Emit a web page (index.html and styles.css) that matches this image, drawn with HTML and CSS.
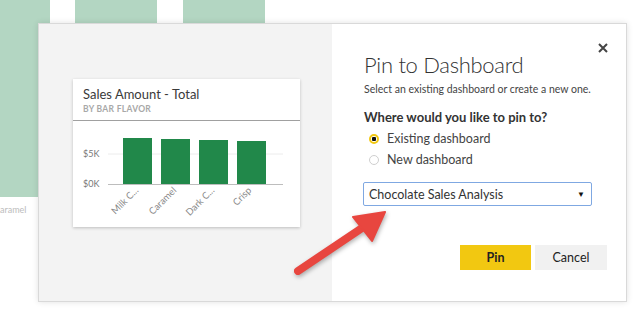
FILE: index.html
```html
<!DOCTYPE html>
<html lang="en">
  <head>
    <meta charset="UTF-8" />
    <meta name="viewport" content="width=device-width, initial-scale=1.0" />
    <title>Pin to Dashboard</title>
    <link rel="stylesheet" href="styles.css">
  </head>
  <body>
    <div class="report">
      <div class="col col-a">
        <div class="col-bar"></div>
        <span class="col-label">Caramel</span>
      </div>
      <div class="col col-b">
        <div class="col-bar"></div>
      </div>
      <div class="col col-c">
        <div class="col-bar"></div>
      </div>
    </div>

    <div class="dialog">
      <div class="preview">
        <div class="tile">
          <div class="tile-head">
            <div class="tile-title">Sales Amount - Total</div>
            <div class="tile-sub">BY BAR FLAVOR</div>
          </div>
          <svg class="chart" width="227" height="104" viewBox="0 0 227 104">
            <line x1="35" y1="33" x2="210" y2="33" stroke="#ececec" stroke-width="1" />
            <rect x="50" y="17" width="29" height="46" fill="#21884a" />
            <rect x="88" y="18" width="29" height="45" fill="#21884a" />
            <rect x="126" y="19" width="29" height="44" fill="#21884a" />
            <rect x="164" y="20" width="29" height="43" fill="#21884a" />
            <line x1="35" y1="63.5" x2="210" y2="63.5" stroke="#bdbdbd" stroke-width="1" />
            <text class="axis" x="10" y="36">$5K</text>
            <text class="axis" x="10" y="66">$0K</text>
            <text class="cat" x="66" y="70" transform="rotate(-45 66 70)">Milk C...</text>
            <text class="cat" x="104" y="70" transform="rotate(-45 104 70)">Caramel</text>
            <text class="cat" x="142" y="70" transform="rotate(-45 142 70)">Dark C...</text>
            <text class="cat" x="179" y="70" transform="rotate(-45 179 70)">Crisp</text>
          </svg>
        </div>
      </div>

      <div class="form">
        <button class="close" aria-label="Close">
          <svg width="10" height="10" viewBox="0 0 10 10">
            <path d="M1 1 L9 9 M9 1 L1 9" stroke="#444" stroke-width="2" />
          </svg>
        </button>
        <h1 class="form-title">Pin to Dashboard</h1>
        <p class="form-sub">Select an existing dashboard or create a new one.</p>
        <div class="question">Where would you like to pin to?</div>
        <div class="options">
          <label class="option">
            <span class="radio checked"></span>
            Existing dashboard
          </label>
          <label class="option">
            <span class="radio"></span>
            New dashboard
          </label>
        </div>
        <div class="select">
          <span>Chocolate Sales Analysis</span>
          <span class="caret">&#9660;</span>
        </div>
        <div class="actions">
          <button class="btn btn-pin">Pin</button>
          <button class="btn btn-cancel">Cancel</button>
        </div>
      </div>
    </div>

    <svg class="arrow" width="640" height="321" viewBox="0 0 640 321">
      <line x1="298" y1="271" x2="362" y2="228" stroke="#e8463f" stroke-width="8" stroke-linecap="round" />
      <polygon points="385,212 353,217 372,241" fill="#e8463f" stroke="#e8463f" stroke-width="2" stroke-linejoin="round" />
    </svg>
  </body>
</html>
```

FILE: styles.css
```css
html,
body {
  margin: 0;
  padding: 0;
  background: #ffffff;
  font-family: "Lato", "Segoe UI", "Open Sans", sans-serif;
  color: #333333;
}

body {
  position: relative;
  width: 640px;
  height: 321px;
  overflow: hidden;
}

.report {
  display: flex;
  gap: 25px;
}

.col {
  display: flex;
  flex-direction: column;
}

.col-a {
  width: 50px;
}

.col-b,
.col-c {
  width: 82px;
}

.col-c {
  margin-left: 1px;
}

.col-bar {
  height: 197px;
  background: #b3d6c2;
}

.col-label {
  margin: 7px 0 0 -6px;
  font-size: 9px;
  color: #bcbcbc;
  white-space: nowrap;
}

.dialog {
  position: absolute;
  left: 38px;
  top: 23px;
  width: 589px;
  height: 279px;
  display: flex;
  border: 1px solid #d9d9d9;
  box-sizing: border-box;
  box-shadow: 0 0 6px rgba(0, 0, 0, 0.12);
}

.preview {
  width: 293px;
  padding: 55px 0 0 34px;
  box-sizing: border-box;
  background: #f3f3f3;
}

.tile {
  width: 227px;
  height: 148px;
  background: #ffffff;
  box-shadow: 0 1px 3px rgba(0, 0, 0, 0.22);
}

.tile-head {
  height: 42px;
  padding: 7px 10px 0;
  box-sizing: border-box;
  border-bottom: 1.5px solid #a0a0a0;
}

.tile-title {
  font-size: 13px;
  line-height: 16px;
  color: #3a3a3a;
}

.tile-sub {
  font-size: 8.5px;
  line-height: 14px;
  font-weight: bold;
  letter-spacing: 0.3px;
  color: #a8a8a8;
}

.chart {
  display: block;
}

.chart text {
  font-family: "Lato", "Segoe UI", sans-serif;
}

.axis {
  font-size: 9px;
  fill: #777777;
}

.cat {
  font-size: 9.5px;
  fill: #8a8a8a;
  text-anchor: end;
}

.form {
  position: relative;
  flex: 1;
  padding: 27px 19px 0 32px;
  background: #ffffff;
}

.close {
  position: absolute;
  top: 19px;
  right: 18px;
  padding: 0;
  border: 0;
  background: none;
  line-height: 0;
}

.form-title {
  margin: 0;
  font-size: 22px;
  line-height: 28px;
  font-weight: 300;
  letter-spacing: -0.3px;
  color: #333333;
}

.form-sub {
  margin: 3px 0 0;
  font-size: 10.5px;
  line-height: 14px;
  color: #444444;
}

.question {
  margin-top: 13px;
  font-size: 13px;
  line-height: 17px;
  font-weight: bold;
  color: #333333;
}

.options {
  margin-top: 2px;
}

.option {
  display: flex;
  align-items: center;
  gap: 8px;
  height: 21px;
  padding-left: 5px;
  font-size: 12.5px;
  color: #444444;
}

.radio {
  width: 10px;
  height: 10px;
  border: 1.5px solid #cfcfcf;
  border-radius: 50%;
  box-sizing: border-box;
  background: #ffffff;
}

.radio.checked {
  border: 2.5px solid #f2c811;
  background: radial-gradient(circle, #111111 0 2px, #ffffff 2.5px);
}

.select {
  display: flex;
  align-items: center;
  justify-content: space-between;
  width: 229px;
  height: 24px;
  margin-top: 12px;
  margin-left: -1px;
  padding: 0 6px 0 5px;
  box-sizing: border-box;
  border: 1px solid #7fa8e2;
  border-radius: 2px;
  font-size: 12.5px;
  color: #333333;
}

.caret {
  font-size: 8px;
  color: #111111;
}

.actions {
  display: flex;
  justify-content: flex-end;
  gap: 4px;
  margin-top: 39px;
}

.btn {
  width: 72px;
  height: 25px;
  padding: 0;
  border: 0;
  font-family: inherit;
  font-size: 12.5px;
  color: #222222;
}

.btn-pin {
  width: 71px;
  background: #f2c811;
  font-weight: bold;
}

.btn-cancel {
  background: #f1f1f1;
}

.arrow {
  position: absolute;
  left: 0;
  top: 0;
  filter: drop-shadow(1px 2px 2px rgba(0, 0, 0, 0.3));
}
```
